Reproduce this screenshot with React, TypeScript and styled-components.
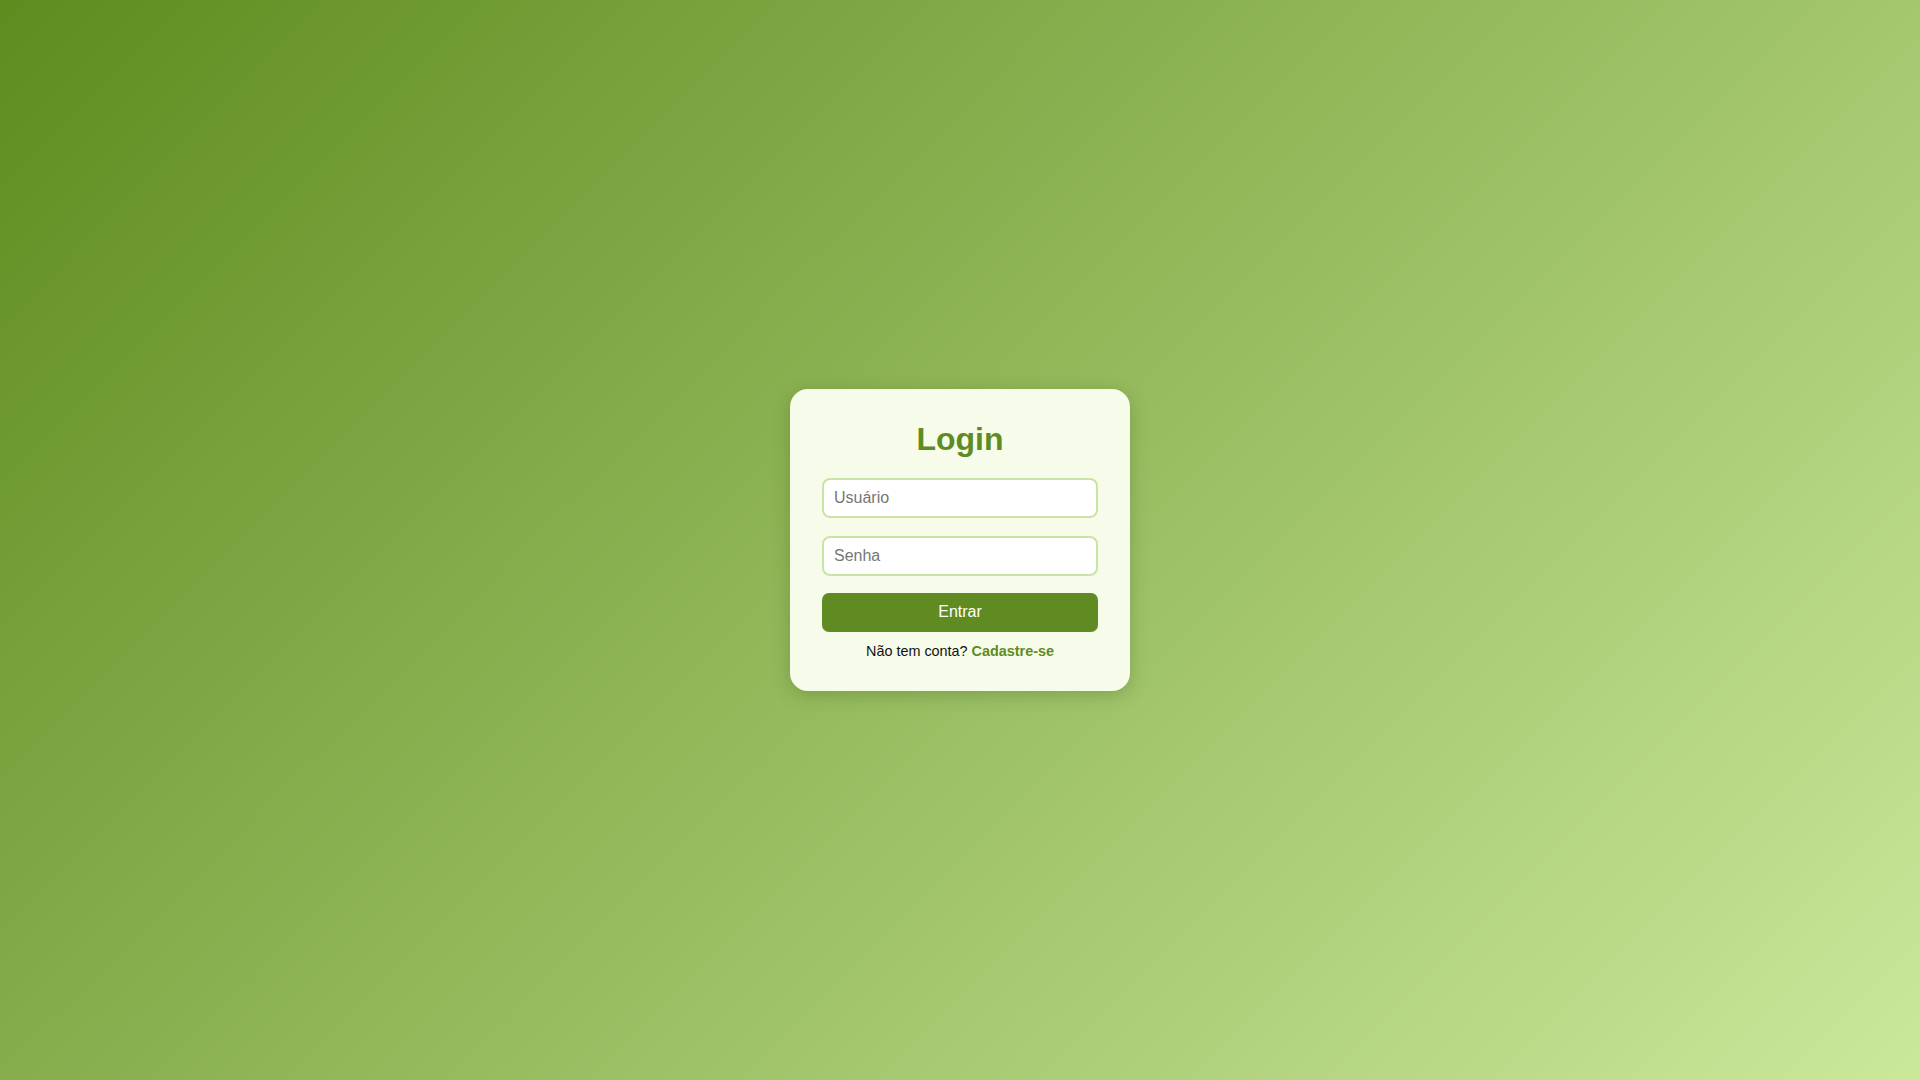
import React, { useState } from 'react';
import styled, { createGlobalStyle } from 'styled-components';

const GlobalStyle = createGlobalStyle`
  html, body, #root {
    margin: 0;
    height: 100%;
  }
  body {
    font-family: "Liberation Sans", Arial, sans-serif;
  }
  * {
    box-sizing: border-box;
  }
`;

const Page = styled.div`
  height: 100vh;
  width: 100%;
  display: flex;
  align-items: center;
  justify-content: center;
  background: linear-gradient(135deg, #5e8c1f 0%, #cbe89b 100%);
`;

const Card = styled.form`
  width: 340px;
  padding: 32px;
  background-color: #f6fbea;
  border-radius: 18px;
  box-shadow: 0 4px 18px rgba(40, 70, 10, 0.25);
  display: flex;
  flex-direction: column;
`;

const Title = styled.h2`
  margin: 0 0 20px;
  font-size: 32px;
  font-weight: bold;
  color: #5e8c22;
  text-align: center;
`;

const Input = styled.input`
  width: 100%;
  height: 40px;
  padding: 0 10px;
  margin-bottom: 17.5px;
  font-family: inherit;
  font-size: 16px;
  background: #fff;
  border: 2px solid #c8e4a4;
  border-radius: 8px;
  outline: none;

  &::placeholder {
    color: #767676;
  }
`;

const Button = styled.button`
  width: 100%;
  height: 38.4px;
  border: none;
  border-radius: 7px;
  background-color: #608b22;
  color: #fff;
  font-family: inherit;
  font-size: 16px;
  cursor: pointer;
`;

const Footer = styled.p`
  margin: 11px 0 0;
  font-size: 14.4px;
  color: #111;
  text-align: center;
`;

const SignupLink = styled.a`
  color: #5e8c22;
  font-weight: bold;
  text-decoration: none;
`;

const App: React.FC = () => {
  const [user, setUser] = useState('');
  const [pass, setPass] = useState('');

  return (
    <>
      <GlobalStyle />
      <Page>
        <Card onSubmit={(e) => e.preventDefault()}>
          <Title>Login</Title>
          <Input
            type="text"
            placeholder="Usuário"
            value={user}
            onChange={(e) => setUser(e.target.value)}
          />
          <Input
            type="password"
            placeholder="Senha"
            value={pass}
            onChange={(e) => setPass(e.target.value)}
          />
          <Button type="submit">Entrar</Button>
          <Footer>
            Não tem conta? <SignupLink href="#">Cadastre-se</SignupLink>
          </Footer>
        </Card>
      </Page>
    </>
  );
};

export default App;
